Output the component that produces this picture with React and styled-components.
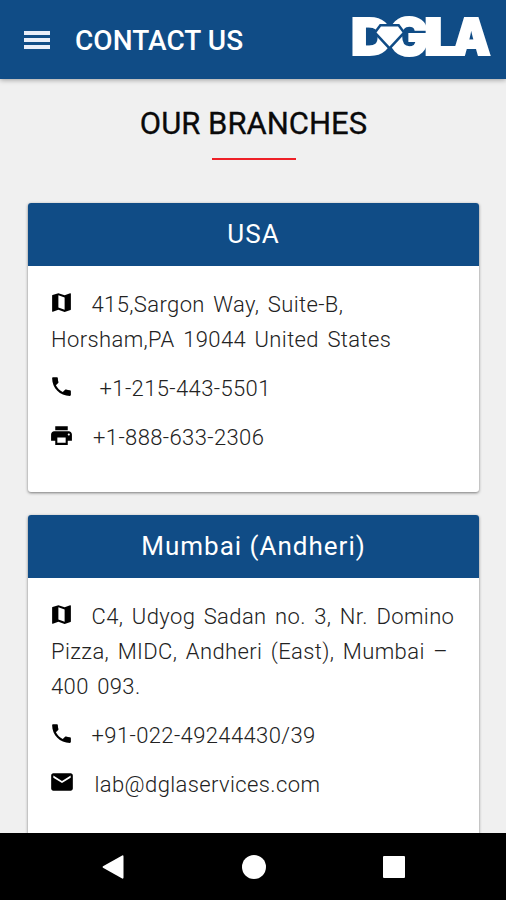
import React from 'react'
import styled, { createGlobalStyle } from 'styled-components'
import { MdMap, MdPhone, MdPrint, MdEmail } from 'react-icons/md'

const GlobalStyle = createGlobalStyle`
    * {
        box-sizing: border-box;
    }
    body {
        margin: 0;
        font-family: Roboto, 'Liberation Sans', sans-serif;
    }
`
const Screen = styled.div`
    display: flex;
    flex-direction: column;
    width: 506px;
    height: 900px;
    overflow: hidden;
    background: #f0f0f0;
`
const Header = styled.header`
    display: flex;
    flex: none;
    align-items: center;
    height: 79px;
    padding: 0 15px 0 24px;
    background: #104c86;
    box-shadow: 0 1px 5px rgba(0, 0, 0, 0.35);
    z-index: 1;
`
const MenuIcon = styled.div`
    display: flex;
    flex-direction: column;
    justify-content: space-between;
    width: 26px;
    height: 18px;
    margin-top: 1px;
`
const MenuBar = styled.span`
    height: 4px;
    background: #e9edf8;
`
const HeaderTitle = styled.h1`
    flex: 1;
    margin: 2px 0 0 25px;
    color: #fff;
    font-size: 28px;
    font-weight: 500;
    line-height: 36px;
    letter-spacing: 0.05px;
    white-space: nowrap;
`
const LogoSvg = styled.svg`
    display: block;
    flex: none;
    margin-bottom: 5px;
    overflow: visible;
    font-family: Inter, sans-serif;
    font-weight: 900;
`
const Content = styled.main`
    flex: 1;
    min-height: 0;
    padding: 27px 27px 0 28px;
    overflow: hidden;
`
const SectionTitle = styled.h2`
    margin: 0;
    color: #0a0a0a;
    font-size: 31px;
    font-weight: 400;
    line-height: 36px;
    text-align: center;
    -webkit-text-stroke: 0.3px #0a0a0a;
`
const Underline = styled.div`
    width: 84px;
    height: 2px;
    margin: 16px auto 43px;
    background: #ee2027;
`
const Card = styled.section`
    height: ${props => props.height}px;
    margin-bottom: 23px;
    border-radius: 3px;
    background: #fff;
    box-shadow: 0 1px 3px rgba(0, 0, 0, 0.5);
`
const CardTitle = styled.h3`
    height: 63px;
    margin: 0;
    border-radius: 3px 3px 0 0;
    background: #104c86;
    color: #fff;
    font-size: 26px;
    font-weight: 400;
    line-height: 62px;
    letter-spacing: 1px;
    text-align: center;
`
const CardBody = styled.div`
    padding: 21px 20px 0 23px;
`
const Line = styled.p`
    margin: 0 0 14px;
    color: #222;
    font-size: 22px;
    font-weight: 300;
    line-height: 35px;
    letter-spacing: 0.38px;
    word-spacing: 2.7px;
    white-space: nowrap;

    svg {
        width: ${props => props.icon || 25}px;
        height: ${props => props.icon || 25}px;
        margin: -2px ${props => props.gap || 18}px 0 ${props => props.shift || -2.5}px;
        color: #000;
        vertical-align: -3px;
    }
`
const NavBar = styled.nav`
    display: flex;
    flex: none;
    align-items: center;
    justify-content: space-between;
    height: 67px;
    padding: 0 101px 0 102px;
    background: #000;
`

const Logo = () => (
    <LogoSvg width="140" height="42" viewBox="0 0 140 42">
        <g fill="#fff" stroke="#fff" strokeWidth="2" fontSize="50.5">
            <text x="0" y="38.5" textLength="41" lengthAdjust="spacingAndGlyphs">D</text>
            <text x="37.5" y="38.5" textLength="40" lengthAdjust="spacingAndGlyphs">G</text>
            <text x="73" y="38.5" textLength="36" lengthAdjust="spacingAndGlyphs">L</text>
            <text x="101.5" y="38.5" textLength="38" lengthAdjust="spacingAndGlyphs">A</text>
        </g>
        <polygon points="30,10.5 47,10.5 51.5,16.5 38.5,30.5 25.5,16.5" fill="#fff" stroke="#104c86" strokeWidth="5" paintOrder="stroke" />
    </LogoSvg>
)

export default function App() {
    return (
        <>
            <GlobalStyle />
            <Screen>
                <Header>
                    <MenuIcon>
                        <MenuBar />
                        <MenuBar />
                        <MenuBar />
                    </MenuIcon>
                    <HeaderTitle>CONTACT US</HeaderTitle>
                    <Logo />
                </Header>
                <Content>
                    <SectionTitle>OUR BRANCHES</SectionTitle>
                    <Underline />
                    <Card height={289}>
                        <CardTitle>USA</CardTitle>
                        <CardBody>
                            <Line><MdMap />415,Sargon Way, Suite-B,<br />Horsham,PA 19044 United States</Line>
                            <Line gap={26}><MdPhone />+1-215-443-5501</Line>
                            <Line gap={19} shift={-2}><MdPrint />+1-888-633-2306</Line>
                        </CardBody>
                    </Card>
                    <Card height={360}>
                        <CardTitle>Mumbai (Andheri)</CardTitle>
                        <CardBody>
                            <Line><MdMap />C4, Udyog Sadan no. 3, Nr. Domino<br />Pizza, MIDC, Andheri (East), Mumbai –<br />400 093.</Line>
                            <Line><MdPhone />+91-022-49244430/39</Line>
                            <Line icon={26} gap={19.5} shift={-2}><MdEmail />lab@dglaservices.com</Line>
                        </CardBody>
                    </Card>
                </Content>
                <NavBar>
                    <svg width="22" height="24" viewBox="0 0 22 24" fill="#fff">
                        <path d="M1 11.2 20.2.4Q21.5 0 21.5 1.4V22.6Q21.5 24 20.2 23.6L1 12.8Q0 12 1 11.2Z" />
                    </svg>
                    <svg width="24" height="24" viewBox="0 0 24 24" fill="#fff">
                        <circle cx="12" cy="12" r="12" />
                    </svg>
                    <svg width="22" height="22" viewBox="0 0 22 22" fill="#fff">
                        <rect width="22" height="22" rx="1" />
                    </svg>
                </NavBar>
            </Screen>
        </>
    )
}
